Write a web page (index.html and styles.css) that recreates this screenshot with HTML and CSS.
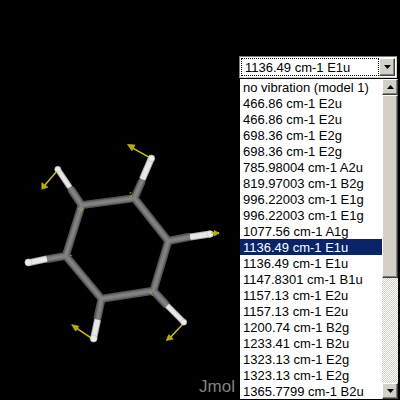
FILE: index.html
```
<!DOCTYPE html>
<html lang="en">
<head>
<meta charset="utf-8">
<title>Jmol</title>
<link rel="stylesheet" href="styles.css">
</head>
<body>
<main class="app">
  <section class="viewer">
    <svg class="molecule" viewBox="0 0 240 400" role="img" aria-label="Benzene with vibration vectors">
      <g stroke-linecap="round" stroke-linejoin="round" fill="none">
        <g stroke="#555" stroke-width="8">
          <path d="M82 206 135 199 169 242 154 292 102 300 66 257Z"/>
          <path d="M82 206 72 191M135 199 142 183M169 242 189 238M154 292 166 305M102 300 98 319M66 257 49 260"/>
        </g>
        <g stroke="#777" stroke-width="5">
          <path d="M82 206 135 199 169 242 154 292 102 300 66 257Z"/>
          <path d="M82 206 70 188M135 199 143 180M169 242 191 238M154 292 168 307M102 300 98 321M66 257 47 260"/>
        </g>
        <g stroke="#848484" stroke-width="2">
          <path d="M82 206 135 199 169 242 154 292 102 300 66 257Z"/>
          <path d="M82 206 70 188M135 199 143 180M169 242 191 238M154 292 168 307M102 300 98 321M66 257 47 260"/>
        </g>
      </g>
      <g fill="none" stroke="#b0b0b0" stroke-width="7">
        <path d="M143 180 152 159M191 238 211 235M98 321 94 340M47 260 28 264"/>
        <path d="M70 188 58 170M168 307 184 323" stroke-width="6"/>
      </g>
      <g fill="none" stroke="#e8e8e8" stroke-width="5">
        <path d="M143 180 152 159M191 238 211 235M98 321 94 340M47 260 28 264"/>
        <path d="M70 188 58 170M168 307 184 323" stroke-width="4"/>
      </g>
      <g fill="#ececec" stroke="#bbb" stroke-width=".6">
        <circle cx="58" cy="170" r="3"/><circle cx="152" cy="159" r="3.300"/><circle cx="211" cy="235" r="3.300"/>
        <circle cx="184.500" cy="323.500" r="3"/><circle cx="94" cy="340" r="3.500"/><circle cx="28.500" cy="263.500" r="3.500"/>
      </g>
      <g fill="none" stroke="#c9c400" stroke-width="1.500">
        <path d="M57 172 45 186M150 158 132 148M212 234H220M183 326 171 339M91 339 76 329"/>
      </g>
      <g fill="#b4ad00" stroke="#d6d000" stroke-width=".6">
        <path d="M42 190 42 183.500 48 188ZM128 145 135.500 145.500 132.500 151.500ZM220 234 215 231.500V237ZM167 342 169.500 336 174 340.500ZM72 326 79 327.500 76 332.500Z"/>
      </g>
      <g fill="none" stroke="#b9b84a" stroke-width="1">
        <path d="M78 209 82 212 84 208M130 194 133 193M131 198 133 195M70 256 73 257M151 293 153 297" stroke-dasharray="2 1"/>
      </g>
    </svg>
    <span class="brand">Jmol</span>
  </section>
  <section class="picker">
    <div class="combo">
      <select class="combo-value" aria-label="Vibration">
        <option>1136.49 cm-1 E1u</option>
      </select>
      <button class="key" type="button" aria-label="Close list"><svg viewBox="0 0 7 4"><path d="M0 0H7L3.500 4Z"/></svg></button>
    </div>
    <div class="menu">
      <ul class="list" role="listbox" aria-label="Vibrations">
        <li role="option">no vibration (model 1)</li>
        <li role="option">466.86 cm-1 E2u</li>
        <li role="option">466.86 cm-1 E2u</li>
        <li role="option">698.36 cm-1 E2g</li>
        <li role="option">698.36 cm-1 E2g</li>
        <li role="option">785.98004 cm-1 A2u</li>
        <li role="option">819.97003 cm-1 B2g</li>
        <li role="option">996.22003 cm-1 E1g</li>
        <li role="option">996.22003 cm-1 E1g</li>
        <li role="option">1077.56 cm-1 A1g</li>
        <li role="option" class="selected" aria-selected="true">1136.49 cm-1 E1u</li>
        <li role="option">1136.49 cm-1 E1u</li>
        <li role="option">1147.8301 cm-1 B1u</li>
        <li role="option">1157.13 cm-1 E2u</li>
        <li role="option">1157.13 cm-1 E2u</li>
        <li role="option">1200.74 cm-1 B2g</li>
        <li role="option">1233.41 cm-1 B2u</li>
        <li role="option">1323.13 cm-1 E2g</li>
        <li role="option">1323.13 cm-1 E2g</li>
        <li role="option">1365.7799 cm-1 B2u</li>
      </ul>
      <div class="scrollbar">
        <button class="key" type="button" aria-label="Scroll up"><svg viewBox="0 0 7 4"><path d="M0 4H7L3.500 0Z"/></svg></button>
        <div class="thumb"></div>
        <div class="track"></div>
        <button class="key" type="button" aria-label="Scroll down"><svg viewBox="0 0 7 4"><path d="M0 0H7L3.500 4Z"/></svg></button>
      </div>
    </div>
  </section>
</main>
</body>
</html>
```
FILE: styles.css
```
* {
  box-sizing: border-box;
}

body {
  margin: 0;
  background: #000;
  color: #000;
  font-family: "Liberation Sans", Arial, sans-serif;
  font-size: 13px;
  line-height: 16px;
}

.app {
  display: flex;
  min-height: 100vh;
}

.viewer {
  position: relative;
  flex: 1;
}

.molecule {
  display: block;
  width: 100%;
}

.brand {
  position: absolute;
  right: 4px;
  bottom: 3px;
  color: #828282;
  font-size: 17px;
  line-height: 20px;
}

.picker {
  width: 161px;
  padding: 56px 2px 0 0;
}

.combo {
  display: flex;
  height: 22px;
  margin-right: 1px;
  padding: 1px;
  background: #fff;
  border: 1px solid;
  border-color: #808080 #d4d0c8 #d4d0c8 #808080;
}

.combo-value {
  flex: 1;
  min-width: 0;
  margin: 0;
  padding: 1px 3px 0;
  appearance: none;
  background: #fff;
  border: 1px dotted #000;
  border-radius: 0;
  color: #000;
  font: inherit;
}

.key {
  display: flex;
  flex: none;
  align-items: center;
  justify-content: center;
  width: 16px;
  height: 16px;
  padding: 0;
  background: #d4d0c8;
  border: 1px solid;
  border-color: #fff #404040 #404040 #fff;
  box-shadow: inset -1px -1px #808080;
}

.combo .key {
  height: 18px;
}

.key svg {
  width: 7px;
  height: 4px;
}

.menu {
  display: flex;
  border: 1px solid #000;
  border-right: 0;
  background: #fff;
}

.list {
  flex: 1;
  margin: 0;
  padding: 0;
  list-style: none;
  white-space: nowrap;
}

.list li {
  height: 16px;
  padding: 1px 0 0 3px;
}

.list .selected {
  background: #0a246a;
  color: #fff;
}

.scrollbar {
  display: flex;
  flex-direction: column;
  width: 16px;
}

.thumb {
  flex: 182;
  background: #d4d0c8;
  border: 1px solid;
  border-color: #fff #404040 #404040 #fff;
  box-shadow: inset -1px -1px #808080;
}

.track {
  flex: 106;
  background: repeating-conic-gradient(#d4d0c8 0 25%, #fff 0 50%) 0 0 / 2px 2px;
}
```
